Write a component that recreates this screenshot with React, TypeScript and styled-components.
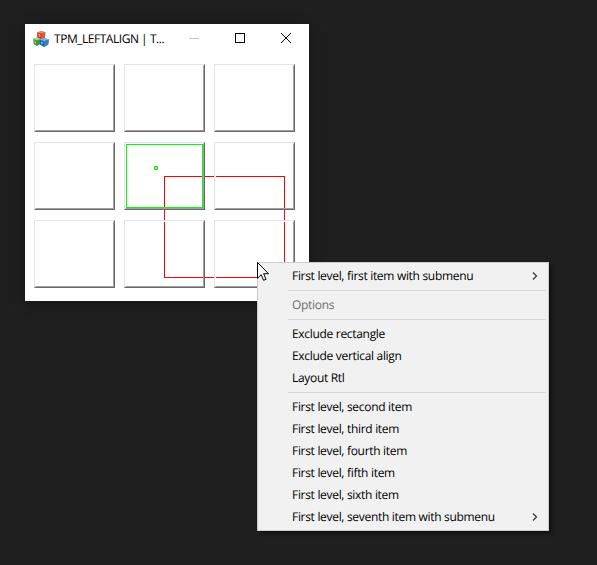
import React from "react";
import styled, { createGlobalStyle } from "styled-components";

const GlobalStyle = createGlobalStyle`
  html, body { margin: 0; background: #1f1f1f; overflow: hidden; }
  * { box-sizing: border-box; }
`;

const Desktop = styled.div`
  position: relative;
  width: 597px;
  height: 565px;
  overflow: hidden;
  background: #1f1f1f;
  font-family: "Open Sans", "Noto Sans", sans-serif;
  font-size: 12px;
  text-rendering: geometricPrecision;
  color: #000;
`;

const Window = styled.section`
  position: absolute;
  isolation: isolate;
  left: 25px;
  top: 24px;
  width: 284px;
  height: 277px;
  background: #fff;
  box-shadow: 0 2px 12px rgba(0, 0, 0, 0.35);
`;

const TitleBar = styled.header`
  display: flex;
  align-items: center;
  height: 29px;
  padding-left: 8px;
`;

const Title = styled.span`
  width: 117px;
  margin-left: 5px;
  line-height: 28px;
  white-space: nowrap;
  letter-spacing: -0.47px;
`;

const Caption = styled.span`
  display: flex;
  flex: none;
  align-items: center;
  justify-content: center;
  width: 46px;
  height: 29px;
  padding-bottom: 1px;
`;

const Client = styled.div`
  position: relative;
  display: grid;
  grid-template-columns: repeat(3, 81px);
  grid-auto-rows: 68px;
  gap: 10px 9px;
  padding: 11px 9px 0;
`;

const Raised = styled.div`
  position: relative;
  z-index: 2;
  display: flex;
  border-style: solid;
  border-width: 1px;
  border-color: #e3e3e3 #696969 #696969 #e3e3e3;
`;

const Bevel = styled.div`
  flex: 1;
  display: flex;
  border-style: solid;
  border-width: 1px;
  border-color: #fff #a0a0a0 #a0a0a0 #fff;
`;

const Selection = styled.div`
  flex: 1;
  border: 1px solid #00ff00;
`;

const Exclusion = styled.div`
  position: absolute;
  z-index: 1;
  left: 139px;
  top: 123px;
  width: 121px;
  height: 102px;
  border: 1px solid #ff0000;
`;

const Anchor = styled.div`
  position: absolute;
  z-index: 3;
  left: 129px;
  top: 113px;
  width: 4px;
  height: 4px;
  border: 1px solid #00ff00;
`;

const Menu = styled.nav`
  position: absolute;
  left: 257px;
  top: 262px;
  width: 292px;
  height: 269px;
  padding: 2px;
  border: 1px solid #ccc;
  background: #f1f1f1;
  box-shadow: 3px 3px 4px -1px rgba(0, 0, 0, 0.6);
`;

const Item = styled.div<{ $muted?: boolean }>`
  display: flex;
  align-items: center;
  justify-content: space-between;
  height: 22px;
  padding: 0 8px 0 32px;
  line-height: 22px;
  white-space: nowrap;
  color: ${(p) => (p.$muted ? "#6d6d6d" : "#000")};
  letter-spacing: -0.31px;
`;

const Separator = styled.div`
  height: 1px;
  margin: 3px 0 3px 28px;
  background: #d7d7d7;
`;

const Pointer = styled.svg`
  position: absolute;
  left: 257px;
  top: 262px;
`;

const AppIcon = () => (
  <svg width="16" height="16" viewBox="0 0 16 16">
    <path d="M4 1.4 8.3 0 12.3 1.3 12 6.4 8 8.2 4.3 6.4Z" fill="#cf3f24" />
    <path d="M4 1.4 8.3 0 12.3 1.3 8.6 2.6Z" fill="#f28a68" />
    <path d="M8.6 2.6 12.3 1.3 12 6.4 8.4 8Z" fill="#e05a38" />
    <path d="M5.5 3.4 7 4.1 6.7 5.6" fill="none" stroke="#ffd2bd" />
    <path d="M0.3 8 4 6.5 7.6 8 7.6 13 3.7 15 0.6 13Z" fill="#3b9438" />
    <path d="M0.3 8 4 6.5 7.6 8 3.9 9.4Z" fill="#a6d48b" />
    <path d="M1.3 10 2.6 11 2.2 12.6" fill="none" stroke="#b9e3a2" />
    <path d="M6.8 8.6 11.2 7 15.8 8.5 15.2 13.6 10.8 16 7 13.7Z" fill="#1c62a8" />
    <path d="M6.8 8.6 11.2 7 15.8 8.5 11 10.3Z" fill="#82b9e5" />
    <path d="M11 10.3 15.8 8.5 15.2 13.6 10.8 16Z" fill="#347fc4" />
    <path d="M8 11.1 9.6 12 8.4 13.2" fill="none" stroke="#b8daf5" />
  </svg>
);

const Chevron = () => (
  <svg width="6" height="8" viewBox="0 0 6 8">
    <path d="M1 0.5 4.5 4 1 7.5" fill="none" stroke="#3c3c3c" strokeWidth="1.3" />
  </svg>
);

type Entry = { label: string; sub?: boolean; muted?: boolean } | null;

const entries: Entry[] = [
  { label: "First level, first item with submenu", sub: true },
  null,
  { label: "Options", muted: true },
  null,
  { label: "Exclude rectangle" },
  { label: "Exclude vertical align" },
  { label: "Layout Rtl" },
  null,
  { label: "First level, second item" },
  { label: "First level, third item" },
  { label: "First level, fourth item" },
  { label: "First level, fifth item" },
  { label: "First level, sixth item" },
  { label: "First level, seventh item with submenu", sub: true },
];

export default function App() {
  return (
    <Desktop>
      <GlobalStyle />
      <Window>
        <TitleBar>
          <AppIcon />
          <Title>TPM_LEFTALIGN | T...</Title>
          <Caption>
            <svg width="10" height="10"><path d="M0 5.5H10" stroke="#c4c4c4" /></svg>
          </Caption>
          <Caption>
            <svg width="10" height="10"><rect x=".5" y=".5" width="9" height="9" fill="none" stroke="#000" /></svg>
          </Caption>
          <Caption>
            <svg width="10" height="10"><path d="M0 0 10 10M10 0 0 10" stroke="#000" /></svg>
          </Caption>
        </TitleBar>
        <Client>
          {Array.from({ length: 9 }, (_, i) => (
            <Raised key={i}>
              <Bevel>{i === 4 && <Selection />}</Bevel>
            </Raised>
          ))}
          <Exclusion />
          <Anchor />
        </Client>
      </Window>
      <Menu>
        {entries.map((e, i) =>
          e ? (
            <Item key={i} $muted={e.muted}>
              <span>{e.label}</span>
              {e.sub && <Chevron />}
            </Item>
          ) : (
            <Separator key={i} />
          )
        )}
      </Menu>
      <Pointer width="12" height="19" viewBox="0 0 12 19">
        <path
          d="M.5 .5V16.3L4.2 12.7 6.6 18.3 9 17.3 6.6 11.7H11.5Z"
          fill="#fff"
          stroke="#000"
        />
      </Pointer>
    </Desktop>
  );
}
